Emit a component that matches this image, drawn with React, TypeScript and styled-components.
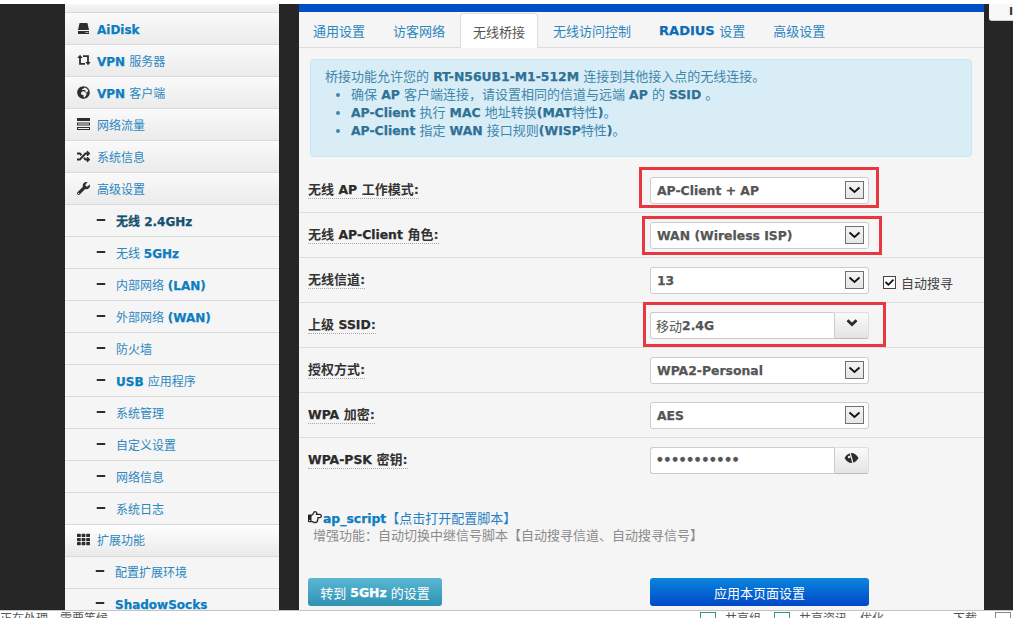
import { ReactNode } from "react";
import styled, { createGlobalStyle } from "styled-components";
import {
  FaCheck,
  FaGlobeAfrica,
  FaMinus,
  FaRandom,
  FaRegHandPointRight,
  FaTh,
  FaWrench,
} from "react-icons/fa";

const GlobalStyle = createGlobalStyle`
  html, body {
    margin: 0;
    padding: 0;
    background: #fff;
    overflow: hidden;
  }
  * {
    box-sizing: border-box;
  }
  b {
    -webkit-text-stroke: 0.25px;
  }
`;

const FONT = `"DejaVu Sans", "Noto Sans CJK SC", sans-serif`;

const Page = styled.div`
  width: 1013px;
  height: 618px;
  overflow: hidden;
  display: flex;
  flex-direction: column;
  font-family: ${FONT};
  font-size: 13px;
  background: #fff;
  padding-top: 4px;
`;

const Shell = styled.div`
  flex: 0 0 606px;
  height: 606px;
  background: #262626;
  display: flex;
  align-items: flex-start;
  padding-left: 65px;
  overflow: hidden;
`;

const Sidebar = styled.nav`
  width: 214px;
  height: 606px;
  overflow: hidden;
  flex: none;
  margin-right: 20px;
`;

const MenuStub = styled.div`
  height: 9px;
  background: linear-gradient(#f6f6f6, #ececec);
  border-bottom: 1px solid #d8d8d8;
`;

const MenuItem = styled.div<{ $sub?: boolean; $shift?: boolean; $active?: boolean; $bright?: boolean }>`
  height: 32px;
  display: flex;
  align-items: center;
  padding-top: ${(p) => (p.$shift || p.$bright ? "0" : "2px")};
  padding-left: ${(p) => (p.$sub ? (p.$shift ? "30px" : "31px") : "12px")};
  border-bottom: 1px solid #dadada;
  background: ${(p) =>
    p.$sub ? "#f5f5f5" : p.$bright ? "linear-gradient(#fff, #eaeaea)" : "linear-gradient(#fafafa, #ebebeb)"};
  color: ${(p) => (p.$active ? "#1b5a80" : "#2c86c0")};
  font-size: 12px;
  line-height: 16px;
  white-space: pre;

  b {
    color: ${(p) => (p.$active ? "#14506f" : "#0d7dc1")};
  }
`;

const MenuIcon = styled.span<{ $sub?: boolean }>`
  width: 20px;
  flex: none;
  display: flex;
  align-items: center;
  color: #2e2e2e;
  font-size: ${(p) => (p.$sub ? "10px" : "13px")};
  margin-top: -3px;
`;

const Main = styled.main`
  width: 685px;
  height: 606px;
  flex: none;
  background: #f5f5f5;
  border-top: 8px solid #004fc4;
  overflow: hidden;
`;

const SideTab = styled.div`
  width: 24px;
  height: 17px;
  margin-left: 5px;
  background: #f8f8f8;
  border-bottom-left-radius: 3px;
  border-bottom: 1px solid #ccc;
  padding: 2px 0 0 20px;
  font-size: 11px;
  font-weight: 700;
  line-height: 12px;
  color: #333;
  overflow: hidden;
`;

const TabBar = styled.div`
  height: 36px;
  display: flex;
  align-items: flex-end;
  gap: 2px;
  padding-left: 1px;
  border-bottom: 1px solid #ddd;
`;

const Tab = styled.div<{ $active?: boolean }>`
  height: ${(p) => (p.$active ? "35px" : "34px")};
  padding: 0 12px;
  display: flex;
  align-items: center;
  white-space: pre;
  border: 1px solid ${(p) => (p.$active ? "#ddd" : "transparent")};
  border-bottom: none;
  border-radius: 4px 4px 0 0;
  background: ${(p) => (p.$active ? "#fff" : "transparent")};
  color: ${(p) => (p.$active ? "#555" : "#2c86c0")};
  margin-bottom: ${(p) => (p.$active ? "-1px" : "0")};

  b {
    color: #0d6cb5;
    font-size: 13px;
  }
`;

const Info = styled.div`
  margin: 11px 12px 0 11px;
  height: 98px;
  padding: 8px 14px 0;
  background: #d9edf7;
  border: 1px solid #c9e6f2;
  border-radius: 4px;
  color: #3f87ab;
  font-size: 13px;
  line-height: 18px;
  white-space: pre;

  b {
    color: #2f7196;
    font-size: 12.4px;
  }
`;

const InfoList = styled.ul`
  margin: 0;
  padding: 0 0 0 26px;
  list-style: disc;
`;

const Rows = styled.div`
  margin-top: 11px;
`;

const Row = styled.div<{ $last?: boolean }>`
  position: relative;
  height: 45px;
  display: flex;
  align-items: center;
  padding-left: 9px;
  border-bottom: 1px solid ${(p) => (p.$last ? "transparent" : "#dedede")};
`;

const Label = styled.div`
  width: 342px;
  flex: none;
`;

const LabelText = styled.span`
  color: #333;
  font-size: 13px;
  font-weight: 700;
  line-height: 17px;
  white-space: pre;
  border-bottom: 1px dotted #aaa;
  display: inline-block;

  b {
    font-size: 12.4px;
    color: #2b2b2b;
  }
`;

const Select = styled.div`
  width: 219px;
  height: 27px;
  display: flex;
  align-items: center;
  justify-content: space-between;
  padding: 0 4px 0 6px;
  background: #fff;
  border: 1px solid #ccc;
  border-radius: 3px;
  color: #555;
  font-size: 12.4px;
  font-weight: 700;
  -webkit-text-stroke: 0.25px;
`;

const SelectArrow = styled.span`
  width: 19px;
  height: 18px;
  display: flex;
  align-items: center;
  justify-content: center;
  background: linear-gradient(#f4f4f4, #e6e6e6);
  border: 1px solid #707070;
`;

const InputGroup = styled.div`
  width: 219px;
  height: 27px;
  display: flex;
`;

const InputBox = styled.div`
  width: 184px;
  height: 27px;
  display: flex;
  align-items: center;
  padding-left: 5px;
  background: #fff;
  border: 1px solid #ccc;
  border-right: none;
  border-radius: 3px 0 0 3px;
  color: #555;
  white-space: pre;

  b {
    font-size: 12.4px;
    color: #555;
  }
`;

const Dots = styled.span`
  font-size: 12px;
  font-weight: 700;
  letter-spacing: -0.1px;
  margin-left: 0;
  color: #555;
  -webkit-text-stroke: 0.6px;
`;

const Addon = styled.div`
  width: 35px;
  height: 27px;
  display: flex;
  align-items: center;
  justify-content: center;
  padding-bottom: 4px;
  background: linear-gradient(#fafafa, #e4e4e4);
  border: 1px solid #ddd;
  border-left: 1px solid #ccc;
  border-bottom: 1px solid #bbb;
  border-radius: 0 3px 3px 0;
`;

const AutoSearch = styled.div`
  display: flex;
  align-items: center;
  gap: 5px;
  margin-left: 14px;
  margin-top: 4px;
  color: #444;
`;

const CheckBox = styled.span`
  width: 13px;
  height: 13px;
  display: flex;
  align-items: center;
  justify-content: center;
  background: #fff;
  border: 1px solid #444;
  color: #111;
  font-size: 9px;
`;

const RedBox = styled.div<{ $left: number; $top: number; $width: number; $height: number }>`
  position: absolute;
  left: ${(p) => p.$left}px;
  top: ${(p) => p.$top}px;
  width: ${(p) => p.$width}px;
  height: ${(p) => p.$height}px;
  border: 3px solid #e8383f;
  pointer-events: none;
`;

const ScriptBlock = styled.div`
  margin-top: 27px;
  padding-left: 9px;
  line-height: 18px;
  white-space: pre;
`;

const ScriptLink = styled.div`
  display: flex;
  align-items: center;
  color: #1f80c4;

  svg {
    color: #222;
    font-size: 14px;
    margin-right: 1px;
    margin-top: -4px;
  }

  b {
    color: #0d7dc1;
    font-size: 12.4px;
  }
`;

const Hint = styled.div`
  margin-top: -1px;
  padding-left: 5px;
  color: #8c8c8c;
`;

const Actions = styled.div`
  margin-top: 33px;
  padding-left: 9px;
  display: flex;
  gap: 208px;
`;

const Button = styled.div<{ $primary?: boolean }>`
  height: 28px;
  width: ${(p) => (p.$primary ? "219px" : "134px")};
  display: flex;
  align-items: center;
  justify-content: center;
  white-space: pre;
  border-radius: 3px;
  color: #fff;
  background: ${(p) =>
    p.$primary ? "linear-gradient(#0a86dc, #0048c8)" : "linear-gradient(#5ab7d4, #2f92b2)"};

  b {
    font-size: 12.4px;
  }
`;

const StatusBar = styled.footer`
  flex: 0 0 8px;
  height: 8px;
  overflow: hidden;
  border-top: 1px solid #c4c4c4;
  display: flex;
  color: #555;
  font-size: 12px;
  line-height: 14px;
  white-space: pre;
`;

const StatusLeft = styled.div`
  width: 700px;
  flex: none;
  padding-top: 1px;
`;

const StatusItem = styled.div<{ $width: number }>`
  width: ${(p) => p.$width}px;
  flex: none;
  display: flex;
  gap: 9px;
  padding-top: 1px;
`;

const GreenBox = styled.span`
  width: 16px;
  height: 12px;
  flex: none;
  border: 1px solid #2d9b6a;
`;

const GreyBox = styled(GreenBox)`
  border-color: #888;
`;

function HddIcon() {
  return (
    <svg width="13" height="13" viewBox="0 0 13 13">
      <path d="M2.6 1 H10.4 L12 8 H1 Z" fill="#2e2e2e" />
      <path
        fillRule="evenodd"
        d="M1 9 H12 V12 H1 Z M8.5 10 v1 h1 v-1 Z M10.3 10 v1 h1 v-1 Z"
        fill="#2e2e2e"
      />
    </svg>
  );
}

function RetweetIcon() {
  return (
    <svg width="14" height="12" viewBox="0 0 14 12">
      <path d="M3 3 V9.8 H8" fill="none" stroke="#2e2e2e" strokeWidth="1.8" />
      <path d="M0.3 4 L3 0.8 L5.7 4 Z" fill="#2e2e2e" />
      <path d="M11 9 V2.2 H6" fill="none" stroke="#2e2e2e" strokeWidth="1.8" />
      <path d="M8.3 8 L11 11.2 L13.7 8 Z" fill="#2e2e2e" />
    </svg>
  );
}

function StackIcon() {
  return (
    <svg width="13" height="12" viewBox="0 0 13 12">
      <path
        fillRule="evenodd"
        d="M0 0 H13 V3 H0 Z M0 4.5 H13 V7.5 H0 Z M1 5.5 V6.5 H12 V5.5 Z M0 9 H13 V12 H0 Z M1 10 V11 H12 V10 Z"
        fill="#2e2e2e"
      />
    </svg>
  );
}

function ChevronIcon() {
  return (
    <svg width="12" height="8" viewBox="0 0 12 8">
      <path d="M1.5 1.2 L6 5.6 L10.5 1.2" fill="none" stroke="#2b2b2b" strokeWidth="2.8" />
    </svg>
  );
}

function EyeCloseIcon() {
  return (
    <svg width="15" height="12" viewBox="0 0 15 12">
      <path
        d="M0.5 6 C2.5 2.6 5 1 7.5 1 C10 1 12.5 2.6 14.5 6 C12.5 9.4 10 11 7.5 11 C5 11 2.5 9.4 0.5 6 Z"
        fill="#2b2b2b"
      />
      <path d="M6 0.5 L9 11.5" stroke="#f2f2f2" strokeWidth="1.2" />
      <circle cx="5.2" cy="5" r="1.3" fill="#f2f2f2" />
    </svg>
  );
}

function Arrow() {
  return (
    <SelectArrow>
      <svg width="13" height="8" viewBox="0 0 13 8">
        <path d="M1.5 1.5 L6.5 6 L11.5 1.5" fill="none" stroke="#111" strokeWidth="1.8" />
      </svg>
    </SelectArrow>
  );
}

function Field({ label, value }: { label: ReactNode; value: string }) {
  return (
    <>
      <Label>
        <LabelText>{label}</LabelText>
      </Label>
      <Select>
        {value}
        <Arrow />
      </Select>
    </>
  );
}

const menuTop = [
  { icon: <HddIcon />, text: <b>AiDisk</b> },
  { icon: <RetweetIcon />, text: <><b>VPN </b>服务器</> },
  { icon: <FaGlobeAfrica />, text: <><b>VPN </b>客户端</> },
  { icon: <StackIcon />, text: <>网络流量</> },
  { icon: <FaRandom />, text: <>系统信息</> },
  { icon: <FaWrench />, text: <>高级设置</> },
];

const menuAdvanced = [
  { text: <b>无线 2.4GHz</b>, active: true },
  { text: <>无线 <b>5GHz</b></> },
  { text: <>内部网络 <b>(LAN)</b></> },
  { text: <>外部网络 <b>(WAN)</b></> },
  { text: <>防火墙</> },
  { text: <><b>USB </b>应用程序</> },
  { text: <>系统管理</> },
  { text: <>自定义设置</> },
  { text: <>网络信息</> },
  { text: <>系统日志</> },
];

export default function App() {
  return (
    <Page>
      <GlobalStyle />
      <Shell>
        <Sidebar>
          <MenuStub />
          {menuTop.map((item, idx) => (
            <MenuItem key={idx}>
              <MenuIcon>{item.icon}</MenuIcon>
              {item.text}
            </MenuItem>
          ))}
          {menuAdvanced.map((item, idx) => (
            <MenuItem key={idx} $sub $active={item.active}>
              <MenuIcon $sub>
                <FaMinus />
              </MenuIcon>
              {item.text}
            </MenuItem>
          ))}
          <MenuItem $bright>
            <MenuIcon>
              <FaTh />
            </MenuIcon>
            扩展功能
          </MenuItem>
          <MenuItem $sub $shift>
            <MenuIcon $sub>
              <FaMinus />
            </MenuIcon>
            配置扩展环境
          </MenuItem>
          <MenuItem $sub $shift>
            <MenuIcon $sub>
              <FaMinus />
            </MenuIcon>
            <b>ShadowSocks</b>
          </MenuItem>
        </Sidebar>

        <Main>
          <TabBar>
            <Tab>通用设置</Tab>
            <Tab>访客网络</Tab>
            <Tab $active>无线桥接</Tab>
            <Tab>无线访问控制</Tab>
            <Tab><b>RADIUS </b>设置</Tab>
            <Tab>高级设置</Tab>
          </TabBar>

          <Info>
            桥接功能允许您的 <b>RT-N56UB1-M1-512M</b> 连接到其他接入点的无线连接。
            <InfoList>
              <li>确保 <b>AP</b> 客户端连接，请设置相同的信道与远端 <b>AP</b> 的 <b>SSID</b> 。</li>
              <li><b>AP-Client</b> 执行 <b>MAC</b> 地址转换<b>(MAT</b>特性<b>)</b>。</li>
              <li><b>AP-Client</b> 指定 <b>WAN</b> 接口规则<b>(WISP</b>特性<b>)</b>。</li>
            </InfoList>
          </Info>

          <Rows>
            <Row>
              <Field label={<>无线 <b>AP</b> 工作模式:</>} value="AP-Client + AP" />
              <RedBox $left={340} $top={-1} $width={240} $height={41} />
            </Row>
            <Row>
              <Field label={<>无线 <b>AP-Client</b> 角色:</>} value="WAN (Wireless ISP)" />
              <RedBox $left={343} $top={3} $width={240} $height={39} />
            </Row>
            <Row>
              <Field label={<>无线信道:</>} value="13" />
              <AutoSearch>
                <CheckBox>
                  <FaCheck />
                </CheckBox>
                自动搜寻
              </AutoSearch>
            </Row>
            <Row>
              <Label>
                <LabelText>上级 <b>SSID</b>:</LabelText>
              </Label>
              <InputGroup>
                <InputBox>移动<b>2.4G</b></InputBox>
                <Addon>
                  <ChevronIcon />
                </Addon>
              </InputGroup>
              <RedBox $left={344} $top={-1} $width={243} $height={45} />
            </Row>
            <Row>
              <Field label={<>授权方式:</>} value="WPA2-Personal" />
            </Row>
            <Row>
              <Field label={<><b>WPA</b> 加密:</>} value="AES" />
            </Row>
            <Row $last>
              <Label>
                <LabelText><b>WPA-PSK</b> 密钥:</LabelText>
              </Label>
              <InputGroup>
                <InputBox>
                  <Dots>•••••••••••</Dots>
                </InputBox>
                <Addon>
                  <EyeCloseIcon />
                </Addon>
              </InputGroup>
            </Row>
          </Rows>

          <ScriptBlock>
            <ScriptLink>
              <FaRegHandPointRight />
              <b>ap_script</b>【点击打开配置脚本】
            </ScriptLink>
            <Hint>增强功能：自动切换中继信号脚本【自动搜寻信道、自动搜寻信号】</Hint>
          </ScriptBlock>

          <Actions>
            <Button>转到 <b>5GHz</b> 的设置</Button>
            <Button $primary>应用本页面设置</Button>
          </Actions>
        </Main>

        <SideTab>I</SideTab>
      </Shell>

      <StatusBar>
        <StatusLeft>正在处理，需要等候</StatusLeft>
        <StatusItem $width={74}>
          <GreenBox />
          共享组
        </StatusItem>
        <StatusItem $width={86}>
          <GreenBox />
          共享资讯
        </StatusItem>
        <StatusItem $width={93}>优化</StatusItem>
        <StatusItem $width={42}>下载</StatusItem>
        <StatusItem $width={18}>
          <GreyBox />
        </StatusItem>
      </StatusBar>
    </Page>
  );
}
